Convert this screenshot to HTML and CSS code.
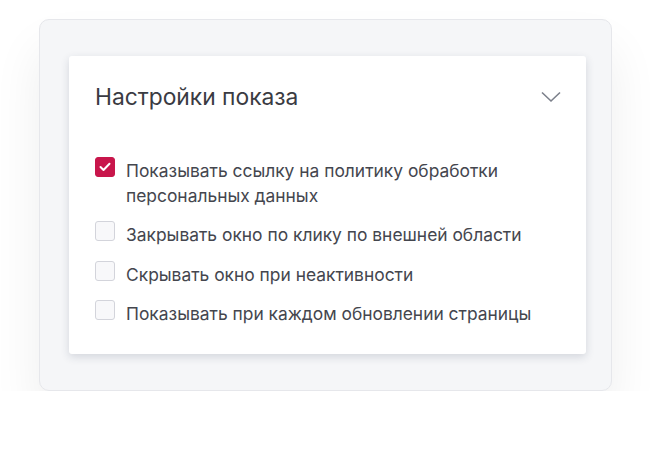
FILE: index.html
```html
<!DOCTYPE html>
<html lang="ru">
<head>
    <meta charset="UTF-8">
    <meta name="viewport" content="width=device-width, initial-scale=1.0">
    <title>Настройки показа</title>
    <link rel="stylesheet" href="styles.css">
</head>
<body>
    <div class="panel">
        <div class="card">
            <div class="card-header">
                <div class="card-title">Настройки показа</div>
                <svg class="chevron" width="20" height="12" viewBox="0 0 20 12">
                    <path d="M1 1.5 L10 10 L19 1.5" fill="none" stroke="#7c808b" stroke-width="1.6"/>
                </svg>
            </div>
            <div class="options">
                <label class="option">
                    <span class="box checked">
                        <svg width="12" height="10" viewBox="0 0 12 10">
                            <path d="M1.5 5 L4.5 8 L10.5 1.8" fill="none" stroke="#fff" stroke-width="2" stroke-linecap="round" stroke-linejoin="round"/>
                        </svg>
                    </span>
                    <span class="option-text">Показывать ссылку на политику обработки персональных данных</span>
                </label>
                <label class="option">
                    <span class="box"></span>
                    <span class="option-text">Закрывать окно по клику по внешней области</span>
                </label>
                <label class="option">
                    <span class="box"></span>
                    <span class="option-text">Скрывать окно при неактивности</span>
                </label>
                <label class="option">
                    <span class="box"></span>
                    <span class="option-text">Показывать при каждом обновлении страницы</span>
                </label>
            </div>
        </div>
    </div>
</body>
</html>
```

FILE: styles.css
```css
body {
    margin: 0;
    background: #ffffff;
    font-family: Inter, "Noto Sans", sans-serif;
    color: #3b3d45;
}

.panel {
    margin: 19px 0 0 39px;
    width: 517px;
    padding: 36px 25px 36px 29px;
    background: #f5f6f8;
    border: 1px solid #e6e7eb;
    border-radius: 10px;
    box-shadow: 0 30px 50px rgba(0, 0, 0, 0.07);
}

.card {
    background: #ffffff;
    border-radius: 3px;
    padding: 24px 26px 27px 26px;
    box-shadow: 0 3px 8px rgba(40, 50, 80, 0.16);
}

.card-header {
    display: flex;
    justify-content: space-between;
    align-items: center;
    height: 34px;
}

.card-title {
    font-size: 22.8px;
    line-height: 32px;
    color: #3a3b42;
}

.chevron {
    margin-right: -1px;
}

.options {
    margin-top: 45px;
    display: flex;
    flex-direction: column;
    gap: 15px;
}

.option {
    display: flex;
    align-items: flex-start;
    gap: 11px;
    cursor: pointer;
}

.box {
    flex: none;
    width: 18px;
    height: 18px;
    margin-top: -2px;
    border: 1px solid #d3d4db;
    border-radius: 3px;
    background: #f8f8fa;
    display: flex;
    align-items: center;
    justify-content: center;
}

.box.checked {
    background: #c8164b;
    border-color: #c8164b;
}

.option-text {
    font-size: 17.4px;
    line-height: 24.5px;
    color: #44464e;
    max-width: 420px;
}
```
